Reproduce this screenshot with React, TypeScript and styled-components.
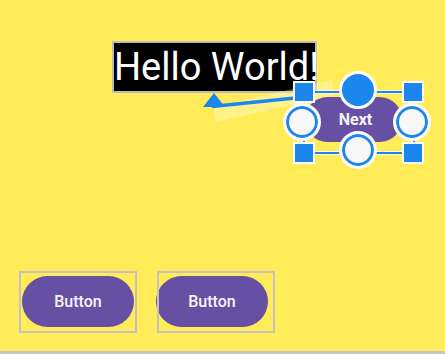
import React from 'react'
import styled, { createGlobalStyle } from 'styled-components';

const YELLOW = '#ffec58';
const PURPLE = '#6650a4';
const BLUE = '#1b87ee';

const GlobalStyle = createGlobalStyle`
  html, body {
    margin: 0;
    padding: 0;
    background: #ffffff;
  }
  body {
    font-family: Roboto, "Liberation Sans", sans-serif;
  }
`;

const Canvas = styled.div`
  position: relative;
  width: 445px;
  height: 354px;
  box-sizing: border-box;
  background: ${YELLOW};
  border-bottom: 3px solid #c6c6c6;
  display: flex;
  flex-direction: column;
  justify-content: flex-end;
  padding: 0 0 18px 19px;
  overflow: hidden;
`;

const HelloLabel = styled.div`
  position: absolute;
  left: 112px;
  top: 41px;
  width: 201px;
  height: 48px;
  border: 2px solid #bcbcbc;
  background: #000;
  color: #fff;
  font-size: 38px;
  line-height: 48px;
  text-align: center;
  white-space: nowrap;
`;

const Connector = styled.svg`
  position: absolute;
  left: 0;
  top: 0;
  pointer-events: none;
`;

// the selected "Next" widget with its resize handles
const Widget = styled.div`
  position: absolute;
  left: 283px;
  top: 71px;
  width: 148px;
  height: 98px;
`;

const Pill = styled.div`
  position: absolute;
  left: 22px;
  top: 26px;
  width: 97px;
  height: 45px;
  border-radius: 23px;
  background: ${PURPLE};
  color: #f7f5fb;
  font-size: 16px;
  font-weight: 700;
  display: flex;
  align-items: center;
  justify-content: center;
  padding-left: 4px;
  box-sizing: border-box;
`;

const Frame = styled.div`
  position: absolute;
  left: 20px;
  top: 20px;
  width: 112px;
  height: 63px;
  box-sizing: border-box;
  border: 2px solid ${BLUE};
  box-shadow: 0 0 0 1px #ffffffcc, inset 0 0 0 1px #ffffffcc;
`;

const Square = styled.div<{ x: number; y: number }>`
  position: absolute;
  left: ${({ x }) => x}px;
  top: ${({ y }) => y}px;
  width: 18px;
  height: 18px;
  background: ${BLUE};
  border: 2px solid #fafafa;
`;

const Knob = styled.div<{ x: number; y: number; filled?: boolean }>`
  position: absolute;
  left: ${({ x }) => x}px;
  top: ${({ y }) => y}px;
  width: 38px;
  height: 38px;
  box-sizing: border-box;
  border-radius: 50%;
  border: 3px solid #fafafa;
  background: ${({ filled }) => (filled ? BLUE : '#f8f8f8')};
  box-shadow: ${({ filled }) => (filled ? 'none' : `inset 0 0 0 3px ${BLUE}`)};
`;

const ButtonRow = styled.div`
  display: flex;
  gap: 20px;
`;

const ButtonFrame = styled.div`
  position: relative;
  width: 118px;
  height: 62px;
  box-sizing: border-box;
  padding: 5px 0 0 3px;

  &::after {
    content: '';
    position: absolute;
    inset: 0;
    border: 2px solid #c2c2c2;
  }
`;

const RoundButton = styled.div<{ shift: number }>`
  width: 112px;
  height: 51px;
  margin-left: ${({ shift }) => shift}px;
  border-radius: 26px;
  background: ${PURPLE};
  color: #f7f5fb;
  font-size: 16px;
  font-weight: 500;
  display: flex;
  align-items: center;
  justify-content: center;
`;

const App = () => (
  <>
    <GlobalStyle />
    <Canvas>
      <HelloLabel>Hello World!</HelloLabel>
      <Connector width="445" height="351" viewBox="0 0 445 351">
        <polygon points="213,107 332,80 334,96 216,122" fill="#ffffff" fillOpacity="0.3" />
        <line x1="212" y1="106.5" x2="300" y2="97.5" stroke={BLUE} strokeWidth="3.5" />
        <polygon points="214,93 203,107 225,107" fill={BLUE} />
      </Connector>
      <Widget>
        <Pill>Next</Pill>
        <Frame />
        <Square x={10} y={10} />
        <Square x={119} y={10} />
        <Square x={10} y={71} />
        <Square x={119} y={71} />
        <Knob x={56} y={0} filled />
        <Knob x={0} y={32} />
        <Knob x={110} y={32} />
        <Knob x={56} y={60} />
      </Widget>
      <ButtonRow>
        <ButtonFrame>
          <RoundButton shift={0}>Button</RoundButton>
        </ButtonFrame>
        <ButtonFrame>
          <RoundButton shift={-4}>Button</RoundButton>
        </ButtonFrame>
      </ButtonRow>
    </Canvas>
  </>
);

export default App
